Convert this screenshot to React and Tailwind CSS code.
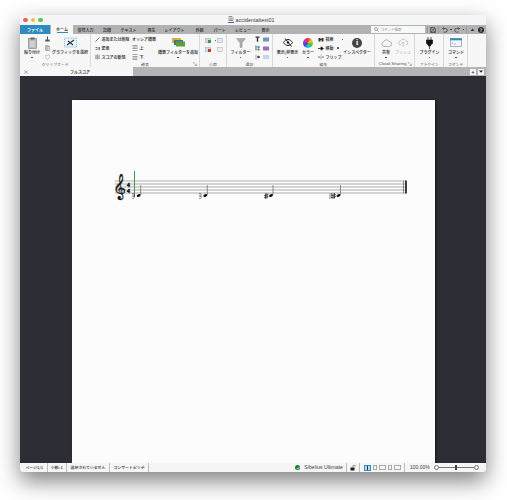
import React from "react";

const Dot = ({ c = "bg-[#333]" }) => <div className={`w-[1.5px] h-[1.5px] rounded-full mx-auto mt-[1.5px] ${c}`} />;

const Large = ({ w, icon, label, dot = true, faded = false }) => (
  <div className="flex flex-col items-center shrink-0" style={{ width: w }}>
    <div className="h-[15px] pt-[2px] flex items-center justify-center">{icon}</div>
    <div className={`h-[6px] leading-[6px] text-[4px] font-bold whitespace-nowrap ${faded ? "text-[#c4c4c4]" : "text-[#444]"}`}>{label}</div>
    {dot && <Dot />}
  </div>
);

const Row = ({ icon, label, dot = 0 }) => (
  <div className="h-[9px] flex items-center gap-[1.5px] text-[4px] font-bold text-[#444] whitespace-nowrap">
    {icon}
    {label && <span>{label}</span>}
    {dot > 0 && <span className="w-[1.5px] h-[1.5px] rounded-full bg-[#333]" style={{ marginLeft: dot }} />}
  </div>
);

const Group = ({ w, label, children, launcher, labelClass = "text-[3.9px]" }) => (
  <div className="relative flex flex-col shrink-0 h-full border-r border-[#d8d8d8] text-[#555]" style={{ width: w }}>
    <div className="flex h-[27px]">{children}</div>
    <div className={`h-[6px] leading-[6px] text-center whitespace-nowrap ${labelClass}`}>{label}</div>
    {launcher && (
      <svg className="absolute right-[2px] bottom-[1px]" width="4" height="4" viewBox="0 0 4 4">
        <path d="M.5 .5h1M.5 .5v1M3.500 3.500L1.500 1.500M3.500 1.500v2h-2" stroke="#777" strokeWidth=".5" fill="none" />
      </svg>
    )}
  </div>
);

const S = ({ w = 6, h = 6, children }) => (
  <svg width={w} height={h} viewBox={`0 0 ${w} ${h}`} className="shrink-0">{children}</svg>
);

const Tab = ({ children, w }) => (
  <div className="h-full flex items-center justify-center text-[4px] font-bold text-[#444] whitespace-nowrap shrink-0" style={{ width: w }}>
    {children}
  </div>
);

const Sep = () => <div className="w-px h-[7px] bg-[#999] shrink-0" />;
const StatusCell = ({ w, children }) => (
  <div className="h-full flex items-center justify-center border-r border-[#bdbdbd] text-[3.9px] font-bold text-[#555] whitespace-nowrap shrink-0" style={{ width: w }}>
    {children}
  </div>
);

const Staff = () => (
  <svg width="363" height="45" viewBox="72 160 363 45" className="block">
    {[181, 184, 187, 190, 193].map((y) => (
      <line key={y} x1="115" x2="406" y1={y} y2={y} stroke="#8a8a8a" strokeWidth=".7" />
    ))}
    <text x="113" y="194" fontSize="22" fontFamily="'DejaVu Sans'" fill="#111" stroke="#111" strokeWidth=".3">𝄞</text>
    <text x="127" y="186.500" fontSize="5.800" fontWeight="700" fontFamily="'Liberation Serif'" fill="#111" stroke="#111" strokeWidth=".4">4</text>
    <text x="127" y="193" fontSize="5.800" fontWeight="700" fontFamily="'Liberation Serif'" fill="#111" stroke="#111" strokeWidth=".4">4</text>
    <line x1="134.500" x2="134.500" y1="171" y2="197" stroke="#3f9a4a" strokeWidth="1" />
    <line x1="403.500" x2="403.500" y1="181" y2="193" stroke="#444" strokeWidth=".6" />
    <line x1="406" x2="406" y1="180.500" y2="193.500" stroke="#111" strokeWidth="1.600" />
    {[
      [138.7, 140.7],
      [205.3, 207.3],
      [271, 273],
      [338.5, 340.5],
    ].map(([x, s]) => (
      <g key={x}>
        <ellipse cx={x} cy="195.500" rx="2.100" ry="1.300" fill="#111" transform={`rotate(-22 ${x} 195.500)`} />
        <line x1={s} x2={s} y1="185" y2="195" stroke="#333" strokeWidth=".5" />
      </g>
    ))}
    <path d="M133 193v1.500M133 195.500v1.500M133 198v1M134.200 194.500v1M134.200 196.500v1" stroke="#111" strokeWidth=".8" fill="none" />
    <path d="M200 193v1.500M200 195.500v1.500M200 198v1M201.200 194.500v1M201.200 196.500v1" stroke="#111" strokeWidth=".8" fill="none" />
    <path d="M265.500 193.500v5.500M267 193v5.500M264 195.500l4.500-.9M264 197.500l4.500-.9" stroke="#111" strokeWidth=".7" fill="none" />
    <path d="M333 193.500v5.500M334.500 193v5.500M331.500 195.500l4.500-.9M331.500 197.500l4.500-.9" stroke="#111" strokeWidth=".7" fill="none" />
    <path d="M330 193.500v5.500M331.500 193v5.500" stroke="#111" strokeWidth=".5" fill="none" />
  </svg>
);

export default function App() {
  return (
    <div className="w-[507px] h-[500px] bg-white pl-[20px] pt-[15px] overflow-hidden font-['Noto_Sans_CJK_JP','Noto_Sans',sans-serif]">
      <div className="w-[466px] h-[457px] rounded-[4px] shadow-[0_9px_22px_rgba(0,0,0,0.5)]">
        <div className="w-full h-full rounded-[4px] overflow-hidden flex flex-col">
          {/* title bar */}
          <div className="relative h-[10px] bg-[#f3f5f7] flex items-center shrink-0">
            <div className="flex gap-[3px] pl-[3px]">
              <span className="w-[4.500px] h-[4.500px] rounded-full bg-[#ee5f57]" />
              <span className="w-[4.500px] h-[4.500px] rounded-full bg-[#f6bd3b]" />
              <span className="w-[4.500px] h-[4.500px] rounded-full bg-[#5fc54a]" />
            </div>
            <div className="flex-1 flex items-center justify-center gap-[1.500px] text-[5.400px] text-[#444] font-['Liberation_Sans',sans-serif] pr-[26px]">
              <S w={6} h={7}>
                <path d="M1 .5h3l1 1v3H1z" fill="#fff" stroke="#555" strokeWidth=".6" />
                <path d="M0 6.500h6" stroke="#7a4aa0" strokeWidth="1.200" />
                <path d="M3 1.500v3" stroke="#222" strokeWidth=".7" />
              </S>
              <span>accidentaltest01</span>
            </div>
          </div>
          {/* tab strip */}
          <div className="h-[9px] bg-[#b2b2b2] flex items-center shrink-0">
            <div className="h-full w-[30px] bg-[#2e8bc0] text-white text-[4px] font-bold flex items-center justify-center shrink-0">ファイル</div>
            <div className="h-full w-[22px] ml-[1px] bg-[#f7f7f7] flex flex-col items-center justify-center text-[4px] font-bold text-[#444] shrink-0">
              <span className="leading-[5px]">ホーム</span>
              <span className="w-[11px] h-[.7px] bg-[#2e8bc0]" />
            </div>
            <Tab w={25}>音符入力</Tab>
            <Tab w={18}>記譜</Tab>
            <Tab w={25}>テキスト</Tab>
            <Tab w={21}>再生</Tab>
            <Tab w={25}>レイアウト</Tab>
            <Tab w={25}>外観</Tab>
            <Tab w={15}>パート</Tab>
            <Tab w={32}>レビュー</Tab>
            <Tab w={13}>表示</Tab>
            <div className="w-[99px] shrink-0" />
            <div className="w-[54px] h-[7px] bg-[#f8f8f8] flex items-center gap-[1.500px] pl-[3px] text-[3.500px] text-[#888] shrink-0">
              <S w={5} h={5}>
                <circle cx="2" cy="2" r="1.500" fill="none" stroke="#777" strokeWidth=".6" />
                <path d="M3 3l1.700 1.700" stroke="#777" strokeWidth=".6" />
              </S>
              <span>コマンド検索</span>
            </div>
            <div className="flex items-center gap-[2px] ml-[2px] shrink-0">
              <Sep />
              <S w={6} h={6}><path d="M.5 .5h4l1 1v4h-5zM1.800 .5v2h2.400v-2M1.500 5.500v-1.500h3v1.500" fill="none" stroke="#333" strokeWidth=".6" /></S>
              <Sep />
              <S w={7} h={6}><path d="M1.500 1.500h3a1.800 1.800 0 010 3.600h-2M1.500 1.500l1.200-1M1.500 1.500l1.200 1.200" fill="none" stroke="#333" strokeWidth=".7" /></S>
              <span className="w-[1.500px] h-[1px] bg-[#444]" />
              <S w={7} h={6}><path d="M5.500 1.500h-3a1.800 1.800 0 000 3.600h2M5.500 1.500l-1.200-1M5.500 1.500l-1.200 1.200" fill="none" stroke="#333" strokeWidth=".7" /></S>
              <span className="w-[1.500px] h-[1px] bg-[#444]" />
              <Sep />
              <div className="ml-[1px]"><S w={5} h={5}><path d="M2.500 1.500l1.800 2.500h-3.600z" fill="#333" /></S></div>
              <span className="w-[6px] h-[6px] ml-[1px] rounded-full bg-[#2e2e2e] text-white text-[4.500px] leading-[6px] text-center font-bold shrink-0">?</span>
            </div>
          </div>
          {/* ribbon */}
          <div className="h-[33px] bg-[#f7f7f7] flex shrink-0">
            <Group w={71} label="クリップボード">
              <Large w={24} label="貼り付け" icon={
                <S w={9} h={12}>
                  <rect x=".5" y="1.500" width="8" height="10" fill="#b9bdc2" stroke="#666" strokeWidth=".5" />
                  <rect x="2.500" y=".5" width="4" height="2" fill="#666" />
                  <path d="M2 5h5M2 7h5M2 9h5" stroke="#fff" strokeWidth=".6" />
                </S>
              } />
              <div className="flex flex-col items-center pt-[1px] w-[6px] shrink-0">
                <Row icon={<S w={5} h={6}><path d="M2 .5h1v3h1.500l.3 2h-4.600l.3-2h1.500z" fill="#555" /></S>} />
                <Row icon={<S w={5} h={6}><path d="M.5 .5h3v5h-3z" fill="#c4c4c4" stroke="#888" strokeWidth=".5" /><path d="M2 1.500h2.500v4h-2.500z" fill="#d8d8d8" stroke="#888" strokeWidth=".5" /></S>} />
                <Row icon={<S w={5} h={6}><path d="M2.500 5.500l-2-2a1.400 1.400 0 012-2 1.400 1.400 0 012 2z" fill="none" stroke="#888" strokeWidth=".5" /></S>} />
              </div>
              <Large w={40} dot={false} label="グラフィックを選択" icon={
                <S w={13} h={11}>
                  <rect x=".5" y="1" width="12" height="9" fill="#e9f2f8" stroke="#4aa3cf" strokeWidth=".7" strokeDasharray="1 1" />
                  <path d="M3 8l7-5M4 4l5 4" stroke="#333" strokeWidth="1.100" />
                </S>
              } />
            </Group>
            <Group w={109} label="譜表" launcher>
              <div className="flex flex-col pt-[1px] pl-[4px] w-[41px] shrink-0">
                <Row label="追加または削除" icon={<S w={5} h={5}><path d="M.5 4.500l4-4" stroke="#444" strokeWidth=".7" /></S>} />
                <Row label="変更" icon={<S w={5} h={5}><path d="M.5 1.500h1.500M.5 3.500h1.500M3 1v3M4.500 1v3" stroke="#444" strokeWidth=".7" /></S>} />
                <Row label="スコアの新規" icon={<S w={5} h={6}><path d="M1 .5v5M2.500 .5v5M4 .5v5M0 2h5M0 4h5" stroke="#666" strokeWidth=".5" /></S>} />
              </div>
              <div className="flex flex-col pt-[1px] w-[25px] shrink-0">
                <Row label="オッシア譜表" />
                <Row label="上" icon={<S w={6} h={6}><path d="M.5 .5h5M.5 2h5M.5 3.500h5M.5 5.500h5" stroke="#666" strokeWidth=".6" /></S>} />
                <Row label="下" icon={<S w={6} h={6}><path d="M.5 .5h5M.5 2.500h5M.5 4h5M.5 5.500h5" stroke="#666" strokeWidth=".6" /></S>} />
              </div>
              <Large w={42} label="譜表フィルターを追加" icon={
                <S w={13} h={9}>
                  <rect x="0" y="0" width="9" height="5" fill="#e8a93a" />
                  <rect x="2" y="2" width="9" height="5" fill="#2d7e8e" />
                  <rect x="4" y="3.500" width="9" height="5" fill="#5f9e3e" />
                </S>
              } />
            </Group>
            <Group w={27} label="小節">
              <div className="flex flex-col pt-[2px] pl-[5px] w-[17px] shrink-0">
                <Row dot={2} icon={<S w={6} h={5}><rect x=".5" y=".5" width="5" height="4" fill="#d4dfe0" stroke="#79a" strokeWidth=".4" /><rect x="3" y="2" width="3" height="3" fill="#3a9a4a" /></S>} />
                <Row icon={<S w={6} h={5}><rect x=".5" y=".5" width="5" height="4" fill="#d4dfe0" stroke="#79a" strokeWidth=".4" /><rect x="3" y="2" width="3" height="3" fill="#c33" /></S>} />
              </div>
              <div className="flex flex-col pt-[2px]">
                <Row icon={<S w={6} h={5}><rect x=".5" y=".5" width="5" height="4" fill="#e8e8e8" stroke="#9aa" strokeWidth=".5" /></S>} />
                <Row icon={<S w={6} h={5}><rect x=".5" y=".5" width="5" height="4" fill="#eee" stroke="#aaa" strokeWidth=".5" /></S>} />
              </div>
            </Group>
            <Group w={46} label="選択">
              <Large w={27} label="フィルター" icon={
                <S w={10} h={10}><path d="M.5 .5h9l-3.500 4.500v4.500h-2v-4.500z" fill="#a8adb0" stroke="#8a8a8a" strokeWidth=".4" /></S>
              } />
              <div className="flex flex-col pt-[1px] items-center w-[7px] shrink-0">
                <Row icon={<S w={5} h={6}><path d="M.5 .5h4v1.200h-1.300v4h-1.400v-4h-1.300z" fill="#333" /></S>} />
                <Row icon={<S w={5} h={6}><path d="M1 .5v5" stroke="#333" strokeWidth=".8" /><circle cx="3.500" cy="2" r="1.200" fill="#39c" /><circle cx="3.500" cy="4.500" r="1" fill="#555" /></S>} />
                <Row icon={<S w={5} h={6}><path d="M1 .5v5" stroke="#999" strokeWidth=".8" /><circle cx="3.500" cy="3" r="1.300" fill="#444" /></S>} />
              </div>
              <div className="flex flex-col pt-[1px] items-center w-[10px] shrink-0">
                <Row icon={<S w={6} h={5}><rect y=".5" width="6" height="4" rx=".5" fill="#6f94b8" /></S>} />
                <Row icon={<S w={6} h={5}><rect y=".5" width="6" height="4" rx=".5" fill="#9c6fb0" /></S>} />
                <Row icon={<S w={6} h={6}><path d="M1 1v4M5 1v4M2 2h2M2 4h2" stroke="#39c" strokeWidth=".6" /></S>} />
              </div>
            </Group>
            <Group w={102} label="編集">
              <Large w={29} label="表示/非表示" icon={
                <S w={10} h={9}>
                  <path d="M.5 4.500c2.500-4 6.500-4 9 0-2.500 4-6.500 4-9 0z" fill="none" stroke="#222" strokeWidth="1" />
                  <circle cx="5" cy="4.500" r="1.300" fill="#222" />
                  <path d="M2 .5l6.500 8" stroke="#222" strokeWidth="1" />
                </S>
              } />
              <Large w={12} label="カラー" icon={
                <div className="w-[10px] h-[10px] rounded-full bg-[conic-gradient(#e33,#e9d22c,#39c440,#2bc7d8,#3242d8,#d22fc0,#e33)]" />
              } />
              <div className="flex flex-col pt-[1px] pl-[4px] w-[29px] shrink-0">
                <Row dot={7} label="検索" icon={<S w={6} h={5}><path d="M.5 4.500v-3.500h2v1h1v-1h2v3.500h-2v-1.500h-1v1.500z" fill="#333" /></S>} />
                <Row dot={2} label="移動" icon={<S w={6} h={5}><path d="M0 2.500h4M3 .8l2.500 1.700-2.500 1.700z" stroke="#222" strokeWidth=".8" fill="#222" /></S>} />
                <Row label="フリップ" icon={<S w={6} h={6}><path d="M3 .5v5M1 2l-.8 1.500h2zM5 2l.8 1.500h-2z" stroke="#555" strokeWidth=".4" fill="none" /></S>} />
              </div>
              <Large w={28} dot={false} label="インスペクター" icon={
                <div className="w-[10px] h-[10px] rounded-full bg-[#444] text-white text-[8px] leading-[10px] text-center font-bold font-['Liberation_Serif',serif]">i</div>
              } />
            </Group>
            <Group w={40} label="Cloud Sharing" launcher labelClass="text-[4.400px] pr-[4px] font-['Liberation_Sans',sans-serif]">
              <Large w={22} label="共有" icon={
                <S w={11} h={8}><path d="M3 7.500a2.300 2.300 0 01-.4-4.500 3 3 0 015.600-.5 2.500 2.500 0 01-.2 5z" fill="none" stroke="#888" strokeWidth=".6" /></S>
              } />
              <Large w={12} faded dot={false} label="プッシュ" icon={
                <S w={10} h={9}><path d="M3 7a2 2 0 01-.3-4 2.700 2.700 0 015-.4 2.200 2.200 0 01-.2 4.400M5 9v-5M3.500 5.500L5 4l1.500 1.500" fill="none" stroke="#aaa" strokeWidth=".6" /></S>
              } />
            </Group>
            <Group w={29} label="プラグイン">
              <Large w={29} label="プラグイン" icon={
                <S w={7} h={12}><path d="M2 0v3M5 0v3M.5 3h6v3.500l-2 1.500v1h-2v-1l-2-1.500zM3.500 9v3" fill="#111" stroke="#111" strokeWidth=".7" /></S>
              } />
            </Group>
            <Group w={24} label="コマンド">
              <Large w={24} label="コマンド" icon={
                <S w={12} h={9}>
                  <rect x=".3" y=".3" width="11.400" height="8.400" fill="#f2f5f7" stroke="#668" strokeWidth=".5" />
                  <rect x=".3" y=".3" width="11.400" height="2" fill="#2e8bc0" />
                  <path d="M2 4.500l1 .7-1 .7M4 6h2" stroke="#555" strokeWidth=".4" fill="none" />
                </S>
              } />
            </Group>
          </div>
          {/* doc tab bar */}
          <div className="h-[9px] bg-[#b4b4b4] flex shrink-0">
            <div className="w-[113px] h-full bg-[#f7f7f7] flex items-center text-[4px] font-bold text-[#444] shrink-0">
              <span className="pl-[3px] w-[50px] text-[#666] text-[6px] leading-[6px] font-normal">×</span>
              <span>フルスコア</span>
            </div>
            <div className="flex-1 flex items-center justify-end gap-[2px] pr-[2px]">
              <div className="w-[6px] h-[6px] bg-[#f4f4f4] text-[5px] leading-[6px] text-center text-[#222] font-bold">+</div>
              <div className="w-[6px] h-[6px] bg-[#f4f4f4] flex items-center justify-center">
                <S w={4} h={3}><path d="M0 .5h4l-2 2.300z" fill="#222" /></S>
              </div>
            </div>
          </div>
          {/* canvas */}
          <div className="flex-1 min-h-0 bg-[#2c2d35] pl-[52px] pt-[24px] overflow-hidden">
            <div className="w-[363px] h-[400px] bg-[#fcfcfc] pt-[60px] shadow-[1px_0_2px_rgba(0,0,0,0.5)]">
              <Staff />
            </div>
          </div>
          {/* status */}
          <div className="h-[9px] bg-[#f5f5f5] flex items-center shrink-0">
            <div className="w-[2px] shrink-0" />
            <StatusCell w={25.5}>ページ1/1</StatusCell>
            <StatusCell w={19.5}>小節: 1</StatusCell>
            <StatusCell w={43}>選択されていません</StatusCell>
            <StatusCell w={39}>コンサートピッチ</StatusCell>
            <div className="flex-1" />
            <div className="h-full flex items-center gap-[4px] border-r border-[#bdbdbd] pr-[3px] text-[5.200px] text-[#444] font-['Liberation_Sans',sans-serif] whitespace-nowrap">
              <span className="w-[5px] h-[5px] rounded-full bg-[#15803d] flex items-center justify-center">
                <S w={4} h={4}><path d="M.7 2l1 1 1.600-2" stroke="#fff" strokeWidth=".7" fill="none" /></S>
              </span>
              <span>Sibelius Ultimate</span>
            </div>
            <div className="h-full w-[13px] flex items-center justify-center border-r border-[#bdbdbd] shrink-0">
              <S w={6} h={6}><rect x=".5" y="2.500" width="4" height="3" fill="#222" /><path d="M3 2.500v-1a1.100 1.100 0 012.200 0" stroke="#222" strokeWidth=".5" fill="none" /></S>
            </div>
            <div className="h-full w-[45px] flex items-center pl-[4px] gap-[2px] border-r border-[#bdbdbd] shrink-0">
              <div className="w-[7px] h-[6px] bg-[#bcd9ee] border border-[#2e8bc0] flex items-center justify-center"><div className="w-[1px] h-[4px] bg-[#333]" /></div>
              {[0, 1, 2, 3].map((i) => (
                <div key={i} className={`h-[5px] border border-[#aaa] ${i === 1 || i === 3 ? "w-[7px]" : "w-[4px]"}`} />
              ))}
            </div>
            <div className="flex items-center h-full shrink-0 pl-[5px] pr-[7px] gap-[6px]">
              <span className="w-[18px] text-[5px] text-[#444] font-['Liberation_Sans',sans-serif] whitespace-nowrap">100.00%</span>
              <div className="w-[45px] flex items-center shrink-0">
                <span className="w-[5px] h-[5px] rounded-full border border-[#777] shrink-0" />
                <div className="flex-1 h-[.5px] bg-[#777] relative">
                  <span className="absolute left-[16px] top-[-2px] w-[1.500px] h-[4.500px] bg-[#444]" />
                </div>
                <span className="w-[5px] h-[5px] rounded-full border border-[#777] shrink-0" />
              </div>
            </div>
          </div>
        </div>
      </div>
    </div>
  );
}
